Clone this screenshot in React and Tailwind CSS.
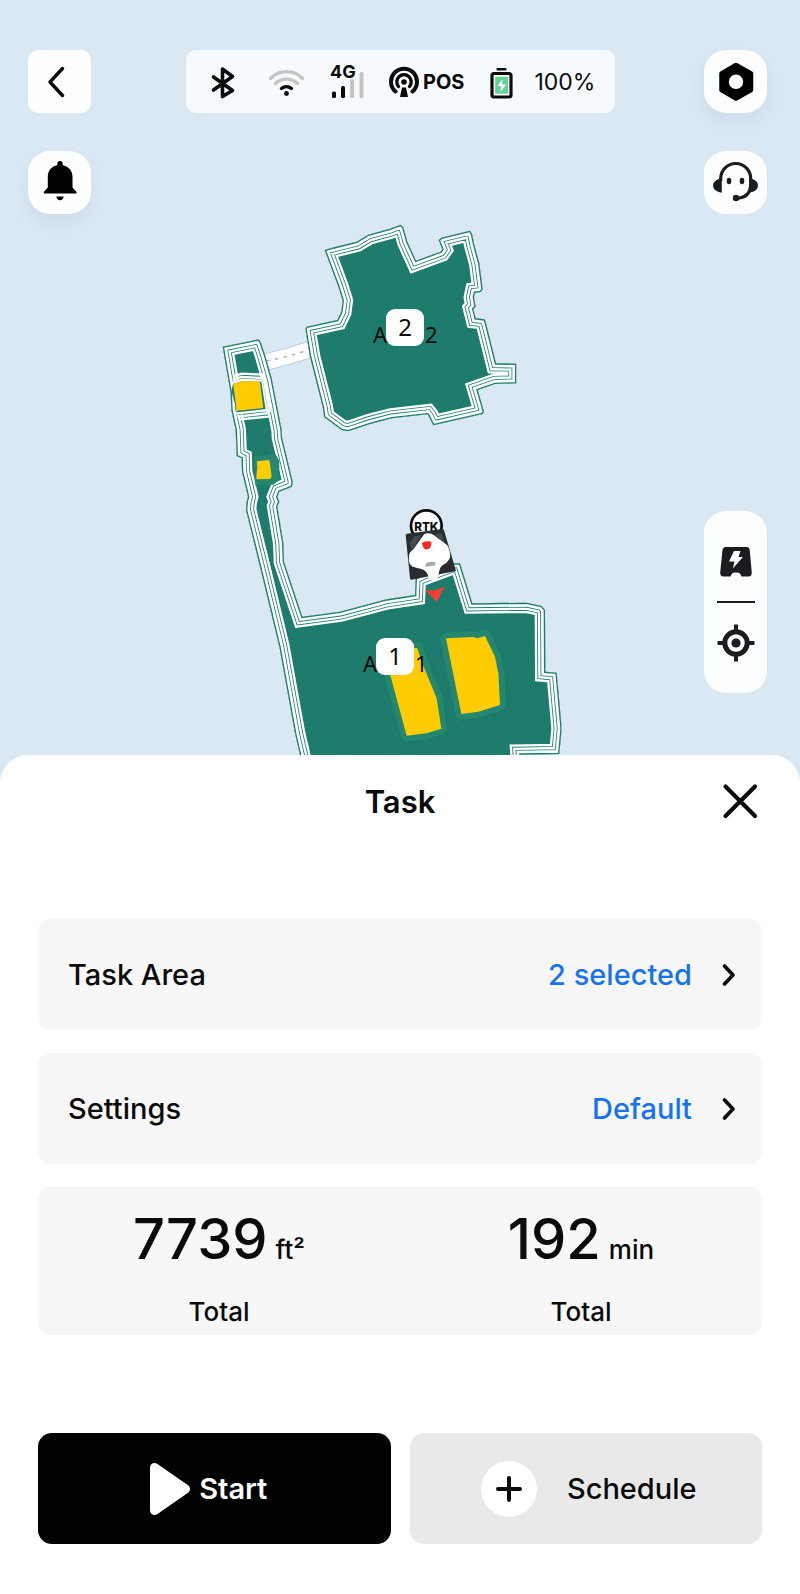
const AREA_TWO =
    'M344 120 L372 112 L440 95 L475 74 L540 56 L572 44 L580 52 L592 95 L618 152 L692 125 L697 118 L686 90 L694 83 L780 62 L786 72 L793 105 L808 160 L818 238 L812 246 L795 248 L792 262 L797 290 L790 297 L797 325 L824 328 L828 340 L858 460 L919 461 L919 520 L855 522 L803 540 L822 605 L818 612 L670 646 L656 618 L652 613 L545 625 L480 642 L415 664 L395 660 L343 622 L338 590 L300 440 L286 356 L290 350 L382 330 L394 305 L398 272 L385 230 Z';

const AREA_ONE =
    'M38 50 L146 28 L152 36 L165 75 L185 145 L215 300 L216 322 L248 455 L246 470 L208 485 L202 500 L208 515 L202 530 L220 640 L222 695 L277 860 L390 845 L530 808 L615 795 L617 745 L640 735 L735 700 L750 700 L787 820 L950 818 L995 828 L1005 840 L1006 1025 L1040 1028 L1055 1195 L1048 1272 L932 1274 L937 1340 L285 1340 L255 1210 L208 950 L150 710 L108 540 L110 515 L114 500 L96 425 L95 385 L80 378 L77 300 L64 240 L62 190 Z';

/* Mowing area: striped fill with concentric perimeter passes */
function MowArea({ id, d }) {
    return (
        <g clipPath={`url(#${id})`} fill="none" strokeLinejoin="miter">
            <clipPath id={id}>
                <path d={d} />
            </clipPath>
            <path d={d} fill="#1f7f6f" />
            <path d={d} fill="url(#stripes)" />
            <path d={d} stroke="#ffffff" strokeWidth="62" />
            <path d={d} stroke="#1f7f6f" strokeWidth="48" />
            <path d={d} stroke="#ffffff" strokeWidth="43" />
            <path d={d} stroke="#1f7f6f" strokeWidth="29" />
            <path d={d} stroke="#ffffff" strokeWidth="24" />
            <path d={d} stroke="#1f7f6f" strokeWidth="8" />
        </g>
    );
}

function Obstacle({ d }) {
    return (
        <g strokeLinejoin="round">
            <path d={d} fill="none" stroke="#1a7470" strokeWidth="41" strokeDasharray="90 60" strokeLinecap="butt" />
            <path d={d} fill="#ffcc02" stroke="#248770" strokeWidth="36" />
            <path d={d} fill="#ffcc02" />
        </g>
    );
}

function AreaLabel({ x, y, number }) {
    return (
        <g className="font-['Noto_Sans',sans-serif]" fill="#0b0b0b">
            <text x={x - 13} y={y + 34} fontSize="22">A</text>
            <text x={x + 39} y={y + 34} fontSize="22">{number}</text>
            <rect x={x} y={y} width="38" height="37" rx="9" fill="#ffffff" />
            <text x={x + 19} y={y + 27} fontSize="24" textAnchor="middle">{number}</text>
        </g>
    );
}

function LawnMap() {
    return (
        <svg viewBox="0 0 800 783" className="col-start-1 row-start-1 w-full" role="img" aria-label="Lawn map">
            <defs>
                <pattern id="stripes" width="8" height="8" patternUnits="userSpaceOnUse" patternTransform="rotate(-10)">
                    <rect width="3" height="8" fill="#1b7668" />
                </pattern>
            </defs>

            {/* Channel between the two areas */}
            <g transform="translate(210 330) scale(0.33333)">
                <path d="M160 72 Q230 58 300 32 V84 Q240 104 178 119 Z" fill="#ffffff" stroke="#c3c8e6" strokeWidth="3" />
                <path d="M170 93 Q230 82 294 60" fill="none" stroke="#a3a7ad" strokeWidth="4" strokeDasharray="10 16" />
            </g>

            <g transform="translate(210 210) scale(0.33333)">
                <MowArea id="area-two" d={AREA_TWO} />
            </g>

            <g transform="translate(210 330) scale(0.33333)">
                <MowArea id="area-one" d={AREA_ONE} />

                {/* Passes around the upper obstacle */}
                <path d="M64 183 L84 254 L178 246 L150 144 L70 158 Z" fill="#1f7f6f" />
                <g fill="none" stroke="#ffffff" strokeWidth="7">
                    <path d="M70 139 L95 131 L158 134" />
                    <path d="M68 149 L95 141 L158 144" />
                    <path d="M64 160 L95 150 L156 152" />
                    <path d="M76 251 L175 240" />
                    <path d="M82 260 L178 249" />
                    <path d="M90 268 L182 259" />
                </g>
                <path d="M150 130 L164 132 L187 246 L168 246 Z" fill="#ffffff" />
                <path d="M157 150 L174 238" stroke="#9ccbc0" strokeWidth="2" />
                <path d="M70 162 L95 154 L145 154 L150 158 L160 234 L80 242 Z" fill="#ffcc02" />

                <path d="M132 378 L196 372 L208 392 L208 450 L190 464 L136 466 Z" fill="#248770" />
                <path d="M141 394 L176 390 L179 394 L185 440 L180 447 L140 448 L139 440 L142 410 Z" fill="#ffcc02" />
            </g>

            <g transform="translate(240 480) scale(0.33333)">
                <Obstacle d="M425 500 L532 504 L545 545 L590 655 L604 746 L560 760 L500 767 L440 545 Z" />
                <Obstacle d="M618 475 L700 471 L712 475 L735 468 L765 530 L775 580 L780 675 L715 695 L664 702 Z" />
            </g>

            <AreaLabel x={386} y={309} number={2} />
            <AreaLabel x={376} y={638} number={1} />

            {/* Reference station and mower */}
            <g transform="translate(380 490) scale(0.33333)">
                <circle cx="139" cy="107" r="46" fill="#ffffff" stroke="#0b0b0b" strokeWidth="8" />
                <text x="139" y="122" fontSize="35" textAnchor="middle" fill="#0b0b0b" className="font-['Inter',sans-serif] font-extrabold">
                    RTK
                </text>
                <path d="M80 131 L187 117 Q191 117 192 121 L228 243 L94 269 Q90 269 90 265 L77 136 Z" fill="#292d32" />
                <path d="M104 138 L124 136 L96 180 L88 160 Z M165 132 L184 130 L196 165 Z" fill="#454a50" />
                <path
                    d="M133 132 Q150 126 162 136 L202 166 Q212 184 210 202 Q206 216 192 223 Q180 230 178 242 L172 266 Q160 272 147 270 L144 256 Q138 242 126 238 L98 230 Q84 222 87 198 Q88 186 100 178 Z"
                    fill="#ffffff"
                />
                <path d="M126 158 Q140 152 154 155 Q156 168 147 176 Q139 181 133 176 Q126 168 126 158 Z" fill="#f42b21" />
                <path d="M137 222 Q140 216 148 216 L165 215 L167 226 L136 231 Z" fill="#a9abac" />
                <path d="M135 299 Q164 308 195 287 L170 335 Z" fill="#fc3b31" />
            </g>
        </svg>
    );
}

function ToolButton({ label, className = '', children }) {
    return (
        <button type="button" aria-label={label} className={`size-[63px] shrink-0 bg-[#fdfeff] ${className}`}>
            <svg viewBox="0 0 63 63" className="size-full" fill="none">
                {children}
            </svg>
        </button>
    );
}

function StatusBar() {
    return (
        <div className="ml-[95px] mr-[89px] flex h-[63px] min-w-0 flex-1 items-center gap-[25px] rounded-[10px] bg-[#f7fafd] pl-[18px] text-[#0b0b0b]">
            <svg viewBox="0 0 38 40" className="h-10 w-[38px] shrink-0" fill="none" stroke="currentColor" strokeWidth="3.600" strokeLinecap="round" strokeLinejoin="round">
                <path d="M9.500 15 L28.500 28.500 L18.500 34.500 V7 L28.500 14.500 L9.500 28" />
            </svg>
            <svg viewBox="0 0 38 40" className="h-10 w-[38px] shrink-0" fill="none" strokeWidth="3.400" strokeLinecap="round">
                <path d="M3.500 16.500 A22 22 0 0 1 35.500 16.500" stroke="#c4c4c4" />
                <path d="M8.500 21.500 A16 16 0 0 1 30.500 21.500" stroke="#c4c4c4" />
                <path d="M14.500 26.500 A8 8 0 0 1 24.500 26.500" stroke="#0b0b0b" />
                <circle cx="19.500" cy="31.500" r="2.400" fill="#0b0b0b" />
            </svg>
            <svg viewBox="0 -6 34 52" className="h-[52px] w-[34px] shrink-0">
                <rect x="20" y="17" width="4" height="19" rx="1.500" fill="#c4c4c4" />
                <rect x="29.500" y="10" width="4" height="26" rx="1.500" fill="#c4c4c4" />
                <rect x="2" y="29.500" width="4" height="6.500" rx="1.500" fill="#0b0b0b" />
                <rect x="11" y="24" width="4" height="12" rx="1.500" fill="#0b0b0b" />
                <text x="0" y="15.500" fontSize="18" fill="#0b0b0b" className="font-bold">4G</text>
            </svg>
            <div className="flex shrink-0 items-center gap-1">
                <svg viewBox="0 0 30 40" className="h-10 w-[30px]" fill="none" stroke="currentColor" strokeLinecap="round">
                    <path d="M6.500 29.500 A13 13 0 1 1 23.500 29.500" strokeWidth="4" />
                    <path d="M9.500 24.500 A7.200 7.200 0 1 1 20.500 24.500" strokeWidth="3.400" />
                    <circle cx="15" cy="20" r="2.800" fill="currentColor" stroke="none" />
                    <path d="M13 25.500 H17 L19 35 H11 Z" fill="currentColor" stroke="none" />
                </svg>
                <span className="text-[20px] leading-6 font-bold">POS</span>
            </div>
            <svg viewBox="0 0 24 40" className="h-10 w-6 shrink-0">
                <rect x="7.500" y="6" width="10" height="2.400" rx="1" fill="#0b0b0b" />
                <rect x="3" y="11.500" width="19" height="23.500" rx="2" fill="#ffffff" stroke="#0b0b0b" strokeWidth="3.200" />
                <rect x="6.200" y="14.700" width="12.800" height="17" fill="#62d392" />
                <path d="M13.500 17 L8.500 24 H12 L11.500 30 L17 22.500 H13.300 Z" fill="#ffffff" />
            </svg>
            <span className="-ml-1 shrink-0 text-[23px] leading-7">100%</span>
        </div>
    );
}

function MapControls() {
    return (
        <div className="z-10 col-start-1 row-start-1 flex flex-col pt-[50px] pr-[33px] pb-[90px] pl-7">
            <div className="flex items-center">
                <ToolButton label="Back" className="rounded-[10px]">
                    <path d="M34.500 18.500 L22 32 L34.500 45.500" stroke="#0b0b0b" strokeWidth="3.400" strokeLinecap="round" strokeLinejoin="round" />
                </ToolButton>
                <StatusBar />
                <ToolButton label="Device settings" className="rounded-[22px] shadow-[0_8px_14px_rgba(120,140,190,0.12)]">
                    <path
                        d="M32 15 L47 23.500 V40 L32 48.500 L17.500 40 V23.500 Z"
                        fill="#000000"
                        stroke="#000000"
                        strokeWidth="4.500"
                        strokeLinejoin="round"
                    />
                    <circle cx="32" cy="31.800" r="7.200" fill="#ffffff" />
                </ToolButton>
            </div>

            <div className="mt-[38px] flex items-center justify-between">
                <ToolButton label="Notifications" className="rounded-[22px] shadow-[0_8px_14px_rgba(120,140,190,0.12)]">
                    <path
                        d="M29.300 12.500 Q29.300 10 32 10 Q34.700 10 34.700 12.500 V14.300 C41 15.500 44.500 20 44.500 26 V36.500 L48.500 41 V42.500 H15.800 V41 L19.800 36.500 V26 C19.800 20 23 15.500 29.300 14.300 Z"
                        fill="#000000"
                    />
                    <path d="M28.300 45.500 H35.700 Q35 49.300 32 49.300 Q29 49.300 28.300 45.500 Z" fill="#000000" />
                </ToolButton>
                <ToolButton label="Support" className="rounded-[22px]">
                    <path d="M16.700 30 V27.500 A15 15 0 0 1 46.700 27.500 V33 C46.700 42 42 47 32 47.300" stroke="#1b1c20" strokeWidth="3.200" />
                    <path d="M17.800 27 V41.800 Q9 40.500 9 34.500 Q9 29 17.800 27 Z M45.500 27.300 Q54 29 54 34.500 Q54 40.500 45.500 41.500 Z" fill="#1b1c20" />
                    <ellipse cx="25" cy="30" rx="2.300" ry="3.300" fill="#1b1c20" />
                    <ellipse cx="38" cy="30" rx="2.300" ry="3.300" fill="#1b1c20" />
                    <circle cx="32" cy="47" r="3.200" fill="#1b1c20" />
                </ToolButton>
            </div>

            <div className="mt-auto flex w-[63px] flex-col items-center self-end rounded-[22px] bg-[#fdfeff]">
                <button type="button" aria-label="Return to charger">
                    <svg viewBox="0 0 63 90" className="h-[90px] w-[63px]">
                        <path
                            d="M22 36 H42.500 Q45.300 36 45.700 39 L47.700 61 Q48 65.500 44.500 65.500 H37.500 Q36 61.500 34 61.500 H30 Q28 61.500 26.500 65.500 H19.500 Q16 65.500 16.200 61.500 L18.500 39 Q19 36 22 36 Z"
                            fill="#1b1c20"
                        />
                        <path d="M30 40 H36.500 L34.500 46 H39 L28.800 57.500 L30.500 50.500 H25 Z" fill="#ffffff" />
                    </svg>
                </button>
                <div className="h-0.5 w-[38px] bg-[#1b1c20]" />
                <button type="button" aria-label="Locate mower">
                    <svg viewBox="0 0 63 90" className="h-[90px] w-[63px]" fill="none" stroke="#1b1c20">
                        <circle cx="32" cy="40" r="11.200" strokeWidth="5" />
                        <circle cx="32" cy="40" r="4.600" fill="#1b1c20" stroke="none" />
                        <path d="M32 21.500 V28 M32 52 V58.500 M13.500 40 H20 M44 40 H50.500" strokeWidth="4" />
                    </svg>
                </button>
            </div>
        </div>
    );
}

function OptionRow({ label, value }) {
    return (
        <button type="button" className="flex h-[111px] w-full items-center rounded-xl bg-[#f7f7f7] pr-[25px] pl-[30px] text-[29px] leading-9 font-medium">
            <span>{label}</span>
            <span className="ml-auto text-[#1675ee]">{value}</span>
            <svg viewBox="0 0 16 24" className="ml-[29px] h-6 w-4" fill="none">
                <path d="M3.500 3 L12 12 L3.500 21" stroke="#0b0b0b" strokeWidth="3.700" strokeLinecap="round" strokeLinejoin="round" />
            </svg>
        </button>
    );
}

function Stat({ value, unit }) {
    return (
        <div className="flex flex-col items-center">
            <div className="flex items-baseline gap-2">
                <span className="text-[56px] leading-[64px] font-medium">{value}</span>
                <span className="text-[26px] leading-8 font-medium">{unit}</span>
            </div>
            <span className="mt-[25px] text-[26px] leading-8 font-medium">Total</span>
        </div>
    );
}

export default function App() {
    return (
        <div className="flex min-h-screen flex-col bg-[#dae8f3] font-['Inter',sans-serif] text-[#0b0b0b]">
            <div className="grid">
                <LawnMap />
                <MapControls />
            </div>

            <section className="z-20 -mt-7 flex-1 rounded-t-[28px] bg-white px-[38px] pt-4 pb-[50px]">
                <header className="grid h-[62px] grid-cols-[44px_1fr_44px] items-center">
                    <h1 className="col-start-2 text-center text-[31px] leading-10 font-semibold">Task</h1>
                    <button type="button" aria-label="Close" className="size-11">
                        <svg viewBox="0 0 44 44" className="size-full">
                            <path d="M7.500 6.500 L37 36 M37 6.500 L7.500 36" stroke="#0b0b0b" strokeWidth="4.200" strokeLinecap="round" />
                        </svg>
                    </button>
                </header>

                <div className="mt-[86px] flex flex-col gap-[23px]">
                    <OptionRow label="Task Area" value="2 selected" />
                    <OptionRow label="Settings" value="Default" />
                    <div className="grid grid-cols-2 rounded-xl bg-[#f7f7f7] pt-5 pb-[7px]">
                        <Stat value="7739" unit="ft²" />
                        <Stat value="192" unit="min" />
                    </div>
                </div>

                <div className="mt-[98px] grid grid-cols-2 gap-[19px] text-[29px] leading-9">
                    <button type="button" className="flex h-[111px] items-center justify-center gap-2 rounded-[14px] bg-black pr-3 font-semibold text-white">
                        <svg viewBox="0 0 42 54" className="h-[54px] w-[42px]">
                            <path d="M5.500 5.500 L36.500 27 L5.500 48.500 Z" fill="#ffffff" stroke="#ffffff" strokeWidth="9" strokeLinejoin="round" />
                        </svg>
                        Start
                    </button>
                    <button type="button" className="flex h-[111px] items-center justify-center gap-[30px] rounded-[14px] bg-[#e9e9e9] pl-1.5 font-medium">
                        <span className="flex size-14 items-center justify-center rounded-full bg-white">
                            <svg viewBox="0 0 28 28" className="size-7">
                                <path d="M14 3 V25 M3 14 H25" stroke="#0b0b0b" strokeWidth="4" strokeLinecap="round" />
                            </svg>
                        </span>
                        Schedule
                    </button>
                </div>
            </section>
        </div>
    );
}
